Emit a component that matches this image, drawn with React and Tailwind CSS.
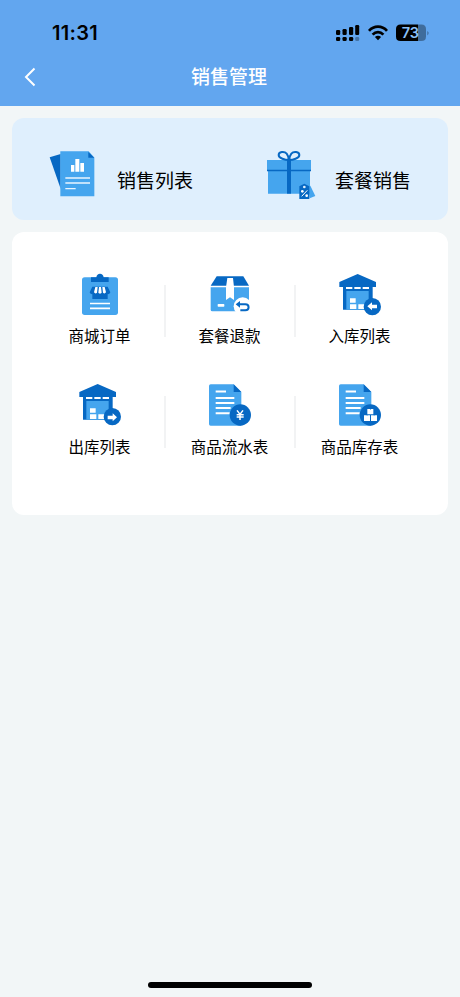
import React from 'react';

const LIGHT = '#45a5ee';
const DARK = '#0768c3';

function SalesListIcon() {
	return (
		<svg className="w-[70px] h-[70px] shrink-0" viewBox="0 0 210 210" fill="none">
			<path d="M29 52L62 42V146Z" fill={DARK} />
			<path d="M61 34H146L163 53V169H61Z" fill={LIGHT} />
			<path d="M145 36V53H163Z" fill={DARK} />
			<path d="M93 75h10v20H93zM106 57h12v38h-12zM121 69h11v26h-11z" fill="#fff" />
			<path d="M76 114H150M76 129H150M76 146H107" stroke="#e9f5ff" strokeWidth="4" />
		</svg>
	);
}

function GiftIcon() {
	return (
		<svg className="w-[70px] h-[70px] shrink-0" viewBox="0 0 210 210" fill="none">
			<path d="M36 60H168V90H36Z" fill={LIGHT} />
			<path d="M39 92H165V161H39Z" fill={LIGHT} />
			<path d="M36 91.5H168" stroke={DARK} strokeWidth="4" />
			<path d="M96 58h12v103H96z" fill={DARK} />
			<path d="M101 60C91 60 71 55 71 45C71 35 88 33 95 41C99 46 101 53 101 60ZM103 60C103 53 105 46 109 41C116 33 133 35 133 45C133 55 113 60 103 60Z" stroke={DARK} strokeWidth="6" />
			<path d="M160 139L166 137L181 168L164 175Z" fill={LIGHT} />
			<path d="M133 139L148 131L163 139V177H133Z" fill={DARK} />
			<circle cx="148" cy="141" r="4" fill="#dfeffd" />
			<path d="M140 169L157 151" stroke="#fff" strokeWidth="3" />
			<circle cx="142" cy="154" r="4" fill="#fff" />
			<circle cx="155" cy="167" r="4" fill="#fff" />
		</svg>
	);
}

function MallOrderIcon() {
	return (
		<svg className="w-[60px] h-[60px]" viewBox="0 0 180 180" fill="none">
			<rect x="36" y="37" width="108" height="113" rx="8" fill={LIGHT} />
			<path d="M63 37H79C80 30 84 26 90 26C96 26 100 30 101 37H116V51H63Z" fill={DARK} />
			<path d="M67 82H113V102H67Z" fill={DARK} />
			<path d="M67 65H113L121 82C119 89 110 89 106 84C101 89 94 89 90 84C86 89 79 89 74 84C70 89 61 89 59 82Z" fill={DARK} />
			<path d="M76 66H83L81 83Q76 88 72 82ZM87 66H93L95 83Q90 88 85 83ZM97 66H104L108 82Q104 88 99 83Z" fill="#fff" />
			<path d="M60 115.5H120M60 130H120" stroke="#fff" strokeWidth="5" />
		</svg>
	);
}

function RefundIcon() {
	return (
		<svg className="w-[60px] h-[60px]" viewBox="0 0 180 180" fill="none">
			<path d="M50 34H130L147 62H32Z" fill={DARK} />
			<path d="M32 67H147V139H37Q32 139 32 134Z" fill={LIGHT} />
			<path d="M82 39H99L102 67V105L90 97L78 105V67Z" fill="#fff" />
			<rect x="53" y="117" width="20" height="8" rx="2" fill="#fff" />
			<circle cx="128" cy="124" r="27" fill="#fff" />
			<path d="M116 118H136C149 118 149 136 136 136H121" stroke={DARK} strokeWidth="6" />
			<path d="M107 118L120 108V128Z" fill={DARK} />
		</svg>
	);
}

function Warehouse({ direction }) {
	return (
		<svg className="w-[60px] h-[60px]" viewBox="0 0 180 180" fill="none">
			<path d="M83 27L138 51V66H128V134H39V66H28V51Z" fill={DARK} />
			<path d="M49 78H116V134H49Z" fill={LIGHT} />
			<path d="M48 66h19v6H48zM73 66h19v6H73zM98 66h19v6H98z" fill="#fff" />
			<path d="M60 100h17v13H60zM60 118h19v14H60zM85 118h18v14H85z" fill="#fff" />
			<circle cx="127" cy="125" r="26" fill={DARK} />
			{direction === 'in' ? (
				<path d="M112 124L126 112V119H141V130H126V136Z" fill="#fff" />
			) : (
				<path d="M141 127L128 115V122H113V133H128V139Z" fill="#fff" />
			)}
		</svg>
	);
}

function ReportIcon({ children }) {
	return (
		<svg className="w-[60px] h-[60px]" viewBox="0 0 180 180" fill="none">
			<path d="M32 28H101L124 51V152H32Q27 152 27 147V33Q27 28 32 28Z" fill={LIGHT} />
			<path d="M101 28L124 51H101Z" fill={DARK} />
			<path d="M47 49.5H78M47 69H103M47 84H103M47 99H92M47 114.5H89" stroke="#fff" strokeWidth="6" />
			<circle cx="121" cy="120" r="32" fill={DARK} />
			{children}
		</svg>
	);
}

function StatusIcons() {
	return (
		<svg className="w-[94px] h-[18px]" viewBox="0 0 94 18" fill="none">
			<g fill="#000">
				<rect x="0" y="6" width="4.2" height="5" rx="1.2" />
				<rect x="6.5" y="5" width="4.2" height="6" rx="1.2" />
				<rect x="13" y="3" width="4.2" height="8" rx="1.2" />
				<rect x="19.2" y="1" width="4" height="10" rx="1.2" />
				<rect x="0" y="13" width="4.2" height="4" rx="1.2" />
				<rect x="6.5" y="13" width="4.2" height="4" rx="1.2" />
				<rect x="13" y="13" width="4.2" height="4" rx="1.2" />
				<rect x="19.2" y="13" width="4" height="4" rx="1.2" opacity="0.3" />
			</g>
			<path d="M33 6.8C38 1.2 46 1.2 51 6.8M36.6 10.6C39.8 7.2 44.2 7.2 47.4 10.6" stroke="#000" strokeWidth="2.7" />
			<path d="M38.9 13C40.7 11.4 43.3 11.4 45.1 13L42 16.2Z" fill="#000" />
			<path d="M64.6 0.5H82V17H64.6Q60 17 60 12.4V5.1Q60 0.5 64.6 0.5Z" fill="#000" />
			<path d="M82 0.5H85.4Q90 0.5 90 5.1V12.4Q90 17 85.4 17H82Z" fill="#000" opacity="0.35" />
			<path d="M91.3 7Q94 9 91.3 11.4Z" fill="#000" opacity="0.35" />
			<text x="74.4" y="14" textAnchor="middle" fontSize="14.5" fontWeight="600" fill="#8cc0f7" fontFamily="Inter, sans-serif">73</text>
		</svg>
	);
}

const rows = [
	[
		{ label: '商城订单', icon: <MallOrderIcon /> },
		{ label: '套餐退款', icon: <RefundIcon /> },
		{ label: '入库列表', icon: <Warehouse direction="in" /> },
	],
	[
		{ label: '出库列表', icon: <Warehouse direction="out" /> },
		{
			label: '商品流水表',
			icon: (
				<ReportIcon>
					<path d="M111 106L120 118L129 106M120 118V135M110 119H131M110 126H131" stroke="#fff" strokeWidth="4.5" />
				</ReportIcon>
			),
		},
		{
			label: '商品库存表',
			icon: (
				<ReportIcon>
					<path d="M112 102h18v16h-18zM102 121h18v17h-18zM123 121h18v17h-18z" fill="#fff" />
					<path d="M120 102h3v2h-3zM110 121h3v2h-3zM131 121h3v2h-3z" fill={LIGHT} />
				</ReportIcon>
			),
		},
	],
];

function App() {
	return (
		<div className="w-[460px] h-[997px] bg-[#f2f6f7] flex flex-col overflow-hidden text-black font-['Inter','Noto_Sans_CJK_SC',sans-serif]">
			<header className="h-[106px] shrink-0 bg-[#62a6ef]">
				{/* Status bar */}
				<div className="h-12 pt-6 pl-[52px] pr-[30px] flex justify-between items-start">
					<span className="text-[20px] leading-[19px] font-semibold tracking-[0.3px]">11:31</span>
					<StatusIcons />
				</div>
				{/* Nav bar */}
				<div className="h-[58px] pl-5 pr-[22px] grid grid-cols-[20px_1fr_20px] items-center">
					<svg className="w-5 h-5" viewBox="0 0 20 20" fill="none">
						<path d="M14.5 1.5L6 10L14.5 18.5" stroke="#fff" strokeWidth="2" />
					</svg>
					<h1 className="pt-0.5 text-center text-[19px] leading-6 font-medium text-white">销售管理</h1>
				</div>
			</header>

			<main className="px-3 pt-3 flex flex-col gap-3">
				<section className="h-[102px] rounded-xl bg-[#dfeffd] pt-[22px] pl-7 flex items-start">
					<div className="w-[215px] flex items-center gap-[7px]">
						<SalesListIcon />
						<span className="text-[19px] pt-[15px]">销售列表</span>
					</div>
					<div className="flex items-center gap-[10px]">
						<GiftIcon />
						<span className="text-[19px] pt-[15px]">套餐销售</span>
					</div>
				</section>

				<section className="h-[283px] rounded-xl bg-white pt-[33px] pl-[23px] flex flex-col gap-7">
					{rows.map((row, r) => (
						<div key={r} className="flex h-[83px]">
							{row.map((item, i) => (
								<div key={item.label} className="w-[130px] flex">
									<div className="w-[130px] shrink-0 flex flex-col items-center">
										<div className={r === 0 ? 'h-[61px] shrink-0' : 'h-[62px] -mt-px shrink-0'}>{item.icon}</div>
										<span className="pr-px text-[15.5px] leading-[22px] whitespace-nowrap">{item.label}</span>
									</div>
									{i < row.length - 1 && <div className="w-0.5 -ml-px mt-5 h-[52px] shrink-0 bg-[#f2f3f4]" />}
								</div>
							))}
						</div>
					))}
				</section>
			</main>

			<div className="mt-auto mb-[9px] mx-auto w-[164px] h-1.5 rounded-full bg-black" />
		</div>
	);
}

export default App;
